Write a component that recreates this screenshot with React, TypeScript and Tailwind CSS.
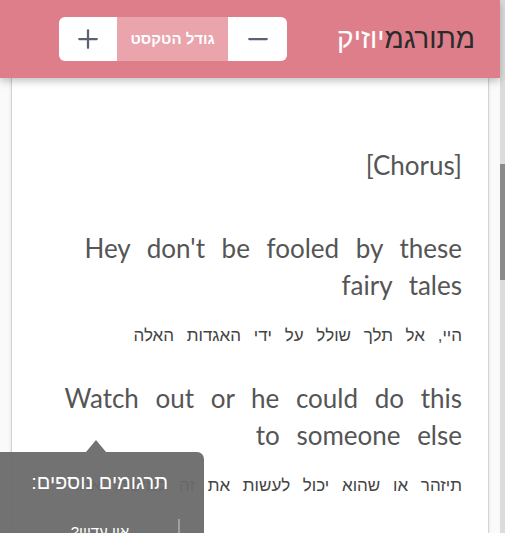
import React from "react";
import { Plus, Minus } from "lucide-react";

type Verse = {
  en: string[];
  he: string;
};

const verses: Verse[] = [
  {
    en: ["Hey don't be fooled by these", "fairy tales"],
    he: "היי, אל תלך שולל על ידי האגדות האלה",
  },
  {
    en: ["Watch out or he could do this", "to someone else"],
    he: "תיזהר או שהוא יכול לעשות את זה למישהו אחר",
  },
];

function Header() {
  return (
    <div className="relative z-10 flex h-[78px] shrink-0 items-center justify-end gap-[50px] bg-[#dd7e8a] pr-[25px] shadow-[0_3px_8px_rgba(0,0,0,0.25)]">
      <div className="flex h-[44px] overflow-hidden rounded-[6px] bg-white">
        <button className="flex w-[58px] items-center justify-center text-[#5b6172]">
          <Plus size={30} strokeWidth={1.8} />
        </button>
        <div
          dir="rtl"
          className="flex w-[111px] items-center justify-center bg-[#e9a4ac] text-[15px] font-bold text-white font-['Liberation_Sans',sans-serif]"
        >
          גודל הטקסט
        </div>
        <button className="flex w-[59px] items-center justify-center text-[#5b6172]">
          <Minus size={30} strokeWidth={1.8} />
        </button>
      </div>

      <p dir="rtl" className="text-[28px] leading-none font-['Liberation_Sans',sans-serif]">
        <span className="text-[#2b2b2b]">מתורגמ</span>
        <span className="text-white">יוזיק</span>
      </p>
    </div>
  );
}

function Lyrics() {
  return (
    <div className="flex-1 px-[11px]">
      <div className="h-full border-x border-[#d4d4d4] bg-white pt-[72px] pr-[26px] text-right text-[#555] shadow-[0_0_3px_rgba(0,0,0,0.12)]">
        <p className="text-[26px] leading-[30px] font-['Lato',sans-serif]">
          [Chorus]
        </p>

        {verses.map((v, idx) => (
          <div key={idx} className={idx === 0 ? "mt-[50px]" : "mt-[32px]"}>
            {v.en.map((line, i) => (
              <p
                key={i}
                className="text-[26px] leading-[37px] [word-spacing:10px] font-['Lato',sans-serif]"
              >
                {line}
              </p>
            ))}
            <p
              dir="rtl"
              className="mt-[20px] text-[17px] leading-[24px] text-[#444] [word-spacing:8px] font-['Liberation_Sans',sans-serif]"
            >
              {v.he}
            </p>
          </div>
        ))}
      </div>
    </div>
  );
}

function MoreTranslations() {
  return (
    <div className="absolute left-0 top-[440px] w-[204px]">
      <div className="ml-[86px] h-0 w-0 border-x-[10px] border-b-[12px] border-x-transparent border-b-[#6a6a6a]/95" />
      <div className="h-[100px] rounded-tr-[7px] bg-[#6a6a6a]/95 text-white font-['Liberation_Sans',sans-serif]">
        <div className="pt-[17px] pr-[36px] text-right">
          <p dir="rtl" className="text-[20px] leading-[26px]">
            תרגומים נוספים:
          </p>
        </div>
        <div className="mt-[27px] flex items-start pr-[24px]">
          <div className="flex flex-1 justify-center pl-[22px]">
            <p dir="rtl" className="text-[15px] leading-[20px]">
              אין עדיין?
            </p>
          </div>
          <div className="mt-[-3px] h-[40px] w-[2px] bg-[#a0a0a0]" />
        </div>
      </div>
    </div>
  );
}

export default function App() {
  return (
    <div className="flex h-[533px] w-[505px] overflow-hidden bg-[#fafafa]">
      <div className="relative flex flex-1 flex-col">
        <Header />
        <Lyrics />
        <MoreTranslations />
      </div>
      <div className="w-[5px] shrink-0 bg-[#dcdcdc]">
        <div className="mt-[164px] h-[116px] bg-[#8a8a8a]" />
      </div>
    </div>
  );
}
